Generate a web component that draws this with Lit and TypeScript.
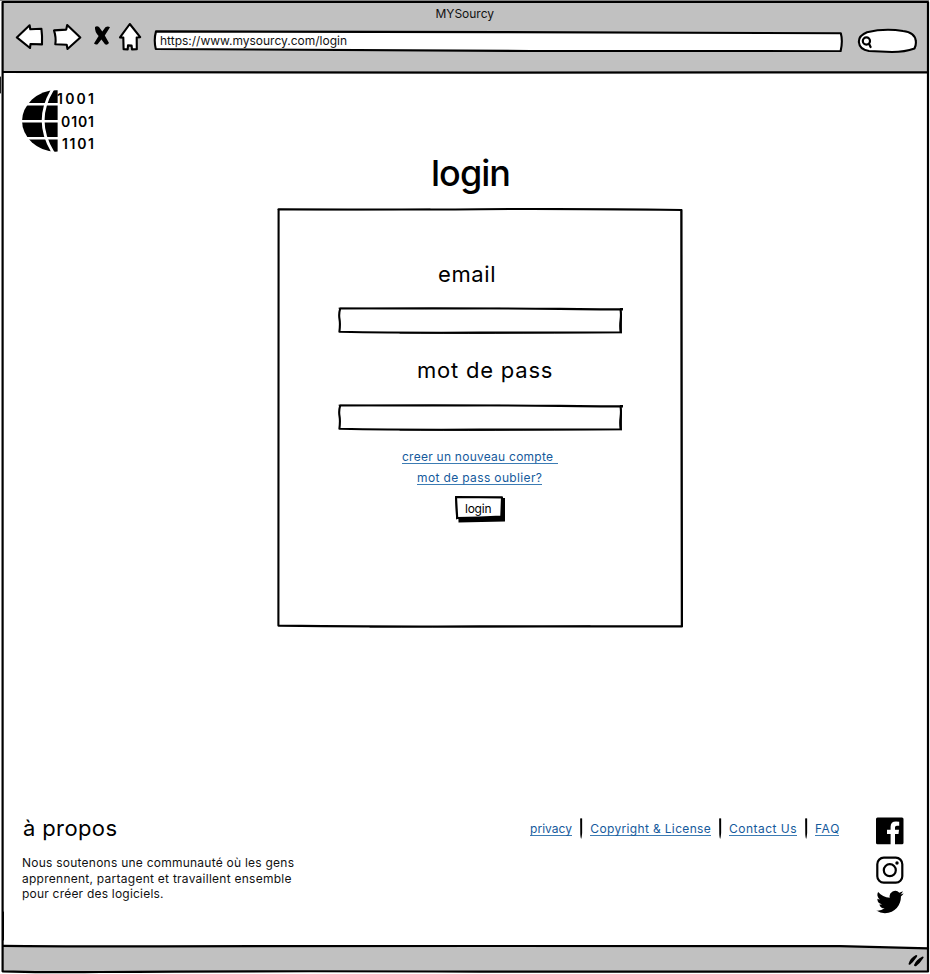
import { LitElement, html, css } from "lit";
import { customElement, property } from "lit/decorators.js";

/** A single line of text whose tracking is adjusted to fill a given width. */
@customElement("fit-text")
class FitText extends LitElement {
  @property() text = "";
  @property({ type: Number }) width = 0;

  static styles = css`
    :host { display: block; white-space: pre; }
    .run { display: inline-block; }
  `;

  render() {
    return html`<span class="run">${this.text}</span>`;
  }

  updated() {
    const run = this.renderRoot.querySelector(".run") as HTMLElement;
    run.style.letterSpacing = "0px";
    const natural = run.getBoundingClientRect().width;
    const gap = (this.width - natural) / Math.max(1, this.text.length - 1);
    run.style.letterSpacing = `${gap}px`;
    this.style.width = `${this.width}px`;
  }
}

const fit = (text: string, width: number) =>
  html`<fit-text .text=${text} .width=${width}></fit-text>`;

/** Hand-drawn box, two slightly different passes of the pen. */
const field = html`
  <svg class="field" viewBox="337 306 286 29">
    <path class="pen" d="M340.2 308.5Q480 308 560 308.9T620.4 309Q621.4 314 620.6 320T620.6 332.2Q560 332.2 480 332.6T339.4 331.8Q340.4 324 339.5 319T340.2 308.5Z" />
    <path class="thin" d="M339 308.2Q430 309.4 500 308.4M620.6 309.4Q622 316 621.4 322L621.4 333M400 333Q480 333.6 621 332.6" />
  </svg>`;

const links: [string, number][] = [
  ["privacy", 42],
  ["Copyright & License", 120.5],
  ["Contact Us", 67.5],
  ["FAQ", 24.5],
];

@customElement("app-root")
class AppRoot extends LitElement {
  static styles = css`
    :host {
      display: block;
      position: relative;
      width: 930px;
      height: 974px;
      overflow: hidden;
      background: #fff;
      color: #000;
      font: 400 12px/16px Inter, "Open Sans", sans-serif;
    }
    svg { display: block; flex: none; }
    .pen { fill: #fff; stroke: #000; stroke-width: 2.1; stroke-linejoin: round; stroke-linecap: round; }
    .line { fill: none; stroke: #000; stroke-width: 2.2; stroke-linejoin: round; stroke-linecap: round; }
    .thin { fill: none; stroke: #000; stroke-width: 1; stroke-linecap: round; }
    .frame { position: absolute; inset: 0; pointer-events: none; }

    .bar { height: 72px; margin: 0 2px 0 3px; background: #c1c1c1; padding-top: 1px; box-sizing: border-box; color: #111; }
    .title { padding: 5px 0 0 432.5px; height: 16px; }
    .tools { display: flex; padding-left: 12px; height: 30px; }
    .back { margin-right: 7px; }
    .forward { margin-right: 10px; }
    .stop { margin-right: 5px; }
    .home { margin-right: 10px; }
    .url { position: relative; width: 691px; margin-right: 13px; }
    .url svg { position: absolute; inset: 0; }
    .url fit-text { position: relative; padding: 11px 0 0 7px; }

    .page { height: 874px; display: flex; flex-direction: column; }
    .logo { display: flex; height: 62px; padding: 18px 0 0 22px; flex: none; }
    .digits { width: 37px; margin: -2px 0 0 -1px; display: flex; flex-direction: column; align-items: flex-end; font-size: 14px; line-height: 22.5px; font-weight: 600; }
    .heading { margin: 1px 0 0 431px; font-size: 36px; line-height: 40px; height: 55px; font-weight: 500; flex: none; }

    .panel { position: relative; width: 406px; height: 420px; margin-left: 277px; flex: none; box-sizing: border-box; padding-top: 52px; }
    .outline { position: absolute; inset: 0; }
    .form { position: relative; display: flex; flex-direction: column; align-items: flex-start; }
    .label { font-size: 22px; line-height: 28px; }
    .email { margin-left: 161px; }
    .password { margin: 21px 0 0 140px; }
    .field { width: 286px; height: 29px; margin: 18px 0 0 60px; }
    .password + .field { margin-top: 19px; }
    .link { color: #155a9c; border-bottom: 1px solid #3c7cb4; height: 14.5px; }
    .create { margin: 17px 0 0 125px; padding-right: 5px; height: 13.5px; }
    .forgot { margin: 6px 0 0 140px; }
    .button { position: relative; width: 52px; height: 29px; margin: 10px 0 0 177px; }
    .button svg { position: absolute; inset: 0; }
    .button fit-text { position: relative; padding: 6px 0 0 11px; }

    .footer { margin-top: 186px; display: flex; padding-left: 22px; align-items: flex-start; }
    .about { width: 508px; }
    .about .label { padding-left: 1px; }
    .text { margin-top: 13px; line-height: 15.6px; color: #111; }
    .links { display: flex; width: 346px; padding-top: 3px; align-items: flex-start; }
    .links .link { padding-top: 3.5px; height: 14.5px; }
    .social { display: flex; flex-direction: column; padding-top: 3px; }
    .instagram { margin-top: 11px; }
    .twitter { margin-top: 6px; }

    .status { margin: 0 2px 0 3px; height: 25px; background: #c1c1c1; display: flex; justify-content: flex-end; align-items: center; padding: 4px 4px 0 0; box-sizing: border-box; }
  `;

  private toolbar() {
    return html`
      <div class="tools">
        <svg class="back" width="30" height="30" viewBox="15 22 30 30">
          <path class="pen" d="M16.8 37.4L29.6 25.3L30.3 29.2L41.4 28.7Q42.4 36 42 44.4L30.5 44L30 48Z" />
        </svg>
        <svg class="forward" width="30" height="30" viewBox="52 22 30 30">
          <path class="pen" d="M54 30.4L66.2 29.6L67.2 25L80.3 37.5L67.5 49L66.7 44.7L55.3 44.2Q56.4 38 54 30.4Z" />
        </svg>
        <svg class="stop" width="20" height="30" viewBox="92 22 20 30">
          <path d="M95 27Q97 25.5 99 27L102.3 31.5L105.4 27.2Q108 26 110 27.2L104.8 35.6L109 43Q107 45.5 105 44.2L101.4 39.5L97.6 44.2Q96 45.2 94 43.6L98.6 36Q94.5 31.5 95 27Z" />
        </svg>
        <svg class="home" width="26" height="30" viewBox="117 22 26 30">
          <path class="pen" d="M129.8 24L120 37.4L123.3 37.6L123.6 49.3L127.7 49.4L128 45.4L131.6 45.6L132 49.4L136.8 49.2L136.7 37.5L140.2 37.2Z" />
        </svg>
        <div class="url">
          <svg width="691" height="30" viewBox="153 22 691 30">
            <path class="pen" d="M156 31.4Q330 31 500 32.1T840.8 33.3Q843 41 840.6 51.2Q700 51.8 530 51T155.8 49Q153.6 40 156 31.4Z" />
          </svg>
          ${fit("https://www.mysourcy.com/login", 187)}
        </div>
        <svg width="61" height="32" viewBox="857 22 61 32">
          <path class="pen" d="M859 42.5Q858 36 867 32.2Q885 28 903 31Q915 32.5 915.8 41Q916.3 45 914.5 48.5Q905 52 892 52L869 51Q859.5 49.5 859 42.5Z" />
          <circle class="line" cx="866.4" cy="41" r="3.6" />
          <path class="line" d="M869 43.8L870.6 47" />
        </svg>
      </div>`;
  }

  private logo() {
    return html`
      <div class="logo">
        <svg width="36" height="62" viewBox="22 90 36 62">
          <path d="M57.6 90.2Q43 89.6 32 99.5Q22.2 109 22 121Q22.2 133 32 142.6Q43 152.4 57.6 151.6Z" />
          <path d="M53.5 88Q32.5 121 54 154" fill="none" stroke="#fff" stroke-width="2.8" />
          <path d="M22 104.3H58M22 121.3H58M22 138.2H58" stroke="#fff" stroke-width="2.5" />
        </svg>
        <div class="digits">${fit("1001", 37)}${fit("0101", 33)}${fit("1101", 32)}</div>
      </div>`;
  }

  render() {
    return html`
      <header class="bar">
        <div class="title">${fit("MYSourcy", 58.5)}</div>
        ${this.toolbar()}
      </header>

      <main class="page">
        ${this.logo()}
        <div class="heading">${fit("login", 80)}</div>
        <div class="panel">
          <svg class="outline" width="406" height="420" viewBox="277 208 406 420">
            <path class="pen" d="M278.6 209.4Q400 209.8 480 209.2T681.5 210Q681 400 682 626.4Q560 626 480 626.4T278.4 625.6Q277.8 420 278.6 209.4Z" />
            <path class="thin" d="M278 209.4Q360 210.2 430 209.2M681 210L681.3 626M370 627Q500 627.2 590 626" />
          </svg>
          <div class="form">
            <div class="label email">${fit("email", 57.5)}</div>
            ${field}
            <div class="label password">${fit("mot de pass", 135.5)}</div>
            ${field}
            <div class="link create">${fit("creer un nouveau compte", 151)}</div>
            <div class="link forgot">${fit("mot de pass oublier?", 125)}</div>
            <div class="button">
              <svg width="52" height="29" viewBox="454 496 52 29">
                <path d="M458 499H505V522.5L458.5 523.5Z" />
                <path class="pen" d="M456 498L502 498.4L501.3 517.5Q480 518.8 457.2 519Z" />
                <path class="thin" d="M455.7 497.5L456.6 520" />
              </svg>
              ${fit("login", 26.5)}
            </div>
          </div>
        </div>

        <footer class="footer">
          <div class="about">
            <div class="label">${fit("à propos", 94)}</div>
            <div class="text">
              ${fit("Nous soutenons une communauté où les gens", 272)}
              ${fit("apprennent, partagent et travaillent ensemble", 269.5)}
              ${fit("pour créer des logiciels.", 141.5)}
            </div>
          </div>
          <nav class="links">
            ${links.map(([name, width], i) => html`
              ${i
                ? html`<svg width="18.3" height="22" viewBox="0 0 18 22">
                    <path d="M8 1.4Q9 .8 10 1.6L10 16Q9.7 20 9 22Q8 20 8.1 14Z" />
                  </svg>`
                : ""}
              <div class="link">${fit(name, width)}</div>`)}
          </nav>
          <div class="social">
            <svg width="28" height="28" viewBox="0 0 28 28">
              <path fill-rule="evenodd" d="M1.5 .5H26Q27.5 .5 27.5 2V25.7Q27.5 27.2 26 27.2H19V17H22.5L23 12.8H19V10.3Q19 8.7 20.8 8.7H23.2V4.8Q22 4.6 20 4.6Q14.6 4.6 14.6 9.8V12.8H11V17H14.6V27.2H1.5Q0 27.2 0 25.7V2Q0 .5 1.5 .5Z" />
            </svg>
            <svg class="instagram" width="28" height="28" viewBox="0 0 28 28">
              <rect class="line" x="1.3" y="1.7" width="25" height="25" rx="6.5" />
              <circle class="line" cx="13.8" cy="14.2" r="6" />
              <circle cx="21" cy="7" r="1.7" />
            </svg>
            <svg class="twitter" width="28" height="24" viewBox="0 1.5 24 21">
              <path d="M23.95 4.57a10 10 0 0 1-2.82.77 4.96 4.96 0 0 0 2.16-2.72c-.95.56-2 .96-3.13 1.18a4.92 4.92 0 0 0-8.38 4.48C7.69 8.1 4.07 6.13 1.64 3.16a4.93 4.93 0 0 0 1.52 6.57 4.9 4.9 0 0 1-2.23-.61v.06a4.92 4.92 0 0 0 3.95 4.83 5 5 0 0 1-2.21.08 4.94 4.94 0 0 0 4.6 3.42A9.87 9.87 0 0 1 0 19.54a14 14 0 0 0 7.55 2.21c9.05 0 14-7.5 14-13.98 0-.21 0-.42-.02-.63a9.94 9.94 0 0 0 2.46-2.55z" />
            </svg>
          </div>
        </footer>
      </main>

      <div class="status">
        <svg width="17" height="15" viewBox="907 954 17 15">
          <path d="M908.5 965Q910 959 916 956Q918 956 916.8 958Q913 963.5 910 965.8Q908.5 966 908.5 965ZM914 966Q916 960.5 922.5 957.5Q924.5 957.5 923 959.5Q919.5 965 916 967.2Q914 967.5 914 966Z" />
        </svg>
      </div>

      <svg class="frame" width="930" height="974" viewBox="0 0 930 974">
        <path d="M0 .5H929" stroke="#858585" stroke-width="1" />
        <path d="M929 946.5L928 949L837 946L837 943H929Z" fill="#fff" />
        <path class="line" d="M2.6 2H928V971.5Q700 972.5 480 971.6T100 972Q50 972.6 2.6 971.3Z" />
        <path class="line" d="M3 72Q300 72.8 480 72.6T928 72.4M3 945.9Q60 946.5 160 946.3T480 946T840 946.2L928 948.4" />
        <path class="thin" d="M.4 77V93M3.5 912V940" />
      </svg>
    `;
  }
}
